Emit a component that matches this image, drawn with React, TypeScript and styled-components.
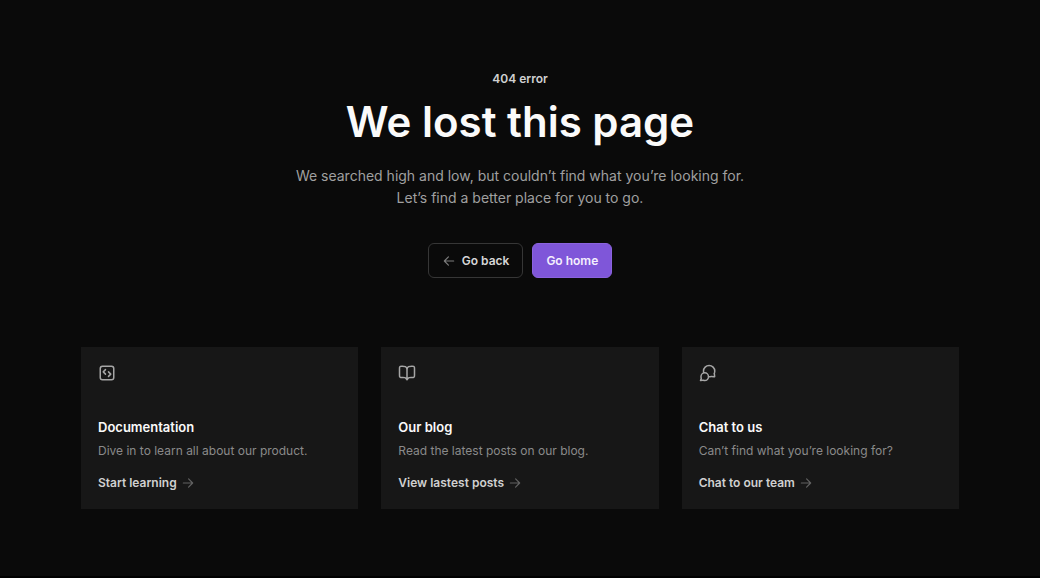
import React from "react";
import styled, { createGlobalStyle } from "styled-components";

const GlobalStyle = createGlobalStyle`
  *, *::before, *::after { box-sizing: border-box; }
  body {
    margin: 0;
    background: #0a0a0a;
    color: #fafafa;
    font-family: Inter, "Liberation Sans", sans-serif;
    -webkit-font-smoothing: antialiased;
  }
  h1, h2, p { margin: 0; }
`;

const Page = styled.main`
  display: flex;
  flex-direction: column;
  gap: 69px;
  min-height: 100vh;
  padding: 70px 81px 64px;
  border-bottom: 2px solid #000;
`;

const Hero = styled.header`
  display: flex;
  flex-direction: column;
  align-items: center;
  text-align: center;
`;

const Eyebrow = styled.p`
  font-size: 12px;
  line-height: 18px;
  font-weight: 600;
  color: #d0d0d0;
`;

const Heading = styled.h1`
  margin-top: 8px;
  font-size: 42px;
  line-height: 52px;
  font-weight: 600;
`;

const Lead = styled.p`
  max-width: 480px;
  margin-top: 17px;
  font-size: 14px;
  line-height: 22px;
  color: #a0a0a0;
`;

const Actions = styled.div`
  display: flex;
  gap: 9px;
  margin-top: 34px;
`;

const Button = styled.button<{ $primary?: boolean }>`
  display: inline-flex;
  align-items: center;
  gap: 6px;
  height: 35px;
  padding: 0 13px;
  border: 1px solid ${(p) => (p.$primary ? "#8b63de" : "#363636")};
  border-radius: 6px;
  background: ${(p) => (p.$primary ? "#7f56d9" : "#0a0a0a")};
  color: ${(p) => (p.$primary ? "#f4effd" : "#d6d6d6")};
  font-family: inherit;
  font-size: 12px;
  line-height: 18px;
  font-weight: 600;
  cursor: pointer;
`;

const Cards = styled.section`
  display: grid;
  grid-template-columns: repeat(3, minmax(0, 1fr));
  gap: 23px;
`;

const Card = styled.article`
  display: flex;
  flex-direction: column;
  align-items: flex-start;
  padding: 17px;
  background: #171717;
`;

const CardTitle = styled.h2`
  margin-top: 35px;
  font-size: 13px;
  line-height: 20px;
  font-weight: 600;
`;

const CardText = styled.p`
  margin-top: 5px;
  font-size: 12px;
  line-height: 18px;
  color: #8a8a8a;
`;

const CardLink = styled.a`
  display: inline-flex;
  align-items: center;
  gap: 4px;
  margin-top: 14px;
  color: #d0d0d0;
  font-size: 12px;
  line-height: 18px;
  font-weight: 600;
  text-decoration: none;
`;

const Icon = styled.svg<{ $size: number; $color: string }>`
  flex: none;
  width: ${(p) => p.$size}px;
  height: ${(p) => p.$size}px;
  fill: none;
  stroke: ${(p) => p.$color};
  stroke-width: 2;
  stroke-linecap: round;
  stroke-linejoin: round;
`;

const Arrow = ({ back = false }: { back?: boolean }) => (
  <Icon viewBox="0 0 24 24" $size={14} $color={back ? "#7c7c7c" : "#626262"} aria-hidden="true">
    <path d={back ? "M20 12H4m7-7-7 7 7 7" : "M4 12h16m-7-7 7 7-7 7"} />
  </Icon>
);

const cards = [
  {
    title: "Documentation",
    text: "Dive in to learn all about our product.",
    link: "Start learning",
    icon: (
      <>
        <rect x="3" y="3" width="18" height="18" rx="3" />
        <path d="m10 7.5-3 3 3 3m4-3 3 3-3 3" />
      </>
    ),
  },
  {
    title: "Our blog",
    text: "Read the latest posts on our blog.",
    link: "View lastest posts",
    icon: (
      <path d="M12 21l-.1-.15c-.7-1.04-1.04-1.56-1.5-1.94-.4-.33-.87-.58-1.38-.74C8.46 18 7.83 18 6.58 18H5.2c-1.12 0-1.68 0-2.11-.22a2 2 0 0 1-.87-.87C2 16.48 2 15.92 2 14.8V6.2c0-1.12 0-1.68.22-2.11a2 2 0 0 1 .87-.87C3.52 3 4.08 3 5.2 3h.4c2.24 0 3.36 0 4.22.44.75.38 1.36 1 1.74 1.74C12 6.04 12 7.16 12 9.4m0 11.6V9.4m0 11.6.1-.15c.7-1.04 1.04-1.56 1.5-1.94.4-.33.87-.58 1.38-.74.56-.17 1.19-.17 2.44-.17h1.38c1.12 0 1.68 0 2.11-.22.38-.19.68-.5.87-.87.22-.43.22-.99.22-2.11V6.2c0-1.12 0-1.68-.22-2.11a2 2 0 0 0-.87-.87C20.48 3 19.92 3 18.8 3h-.4c-2.24 0-3.36 0-4.22.44-.75.38-1.36 1-1.74 1.74C12 6.04 12 7.16 12 9.4" />
    ),
  },
  {
    title: "Chat to us",
    text: "Can’t find what you’re looking for?",
    link: "Chat to our team",
    icon: (
      <path d="M6.1 10.57A8 8 0 0 1 6 9.43C6 5.33 9.36 2 13.5 2S21 5.33 21 9.43c0 .92-.17 1.81-.48 2.63-.07.17-.1.25-.11.32a.8.8 0 0 0-.02.19c0 .07.01.15.03.3l.4 3.32c.04.36.06.54 0 .67a.5.5 0 0 1-.27.26c-.13.06-.31.03-.67-.02l-3.24-.48c-.17-.02-.25-.04-.33-.04a.8.8 0 0 0-.2.03c-.08.01-.18.05-.39.13A7.5 7.5 0 0 1 12.4 16.8M7.63 22C10.4 22 12.63 19.7 12.63 16.87S10.4 11.74 7.63 11.74 2.63 14.03 2.63 16.87c0 .57.09 1.12.26 1.63.07.21.1.32.12.4a.8.8 0 0 1 .01.2c0 .08-.02.17-.06.35L2 22l2.99-.41.31-.04.2.01c.07.02.17.05.38.13.55.2 1.14.31 1.75.31Z" />
    ),
  },
];

export default function App() {
  return (
    <>
      <GlobalStyle />
      <Page>
        <Hero>
          <Eyebrow>404 error</Eyebrow>
          <Heading>We lost this page</Heading>
          <Lead>
            We searched high and low, but couldn’t find what you’re looking for. Let’s find a better
            place for you to go.
          </Lead>
          <Actions>
            <Button type="button">
              <Arrow back />
              Go back
            </Button>
            <Button type="button" $primary>
              Go home
            </Button>
          </Actions>
        </Hero>
        <Cards>
          {cards.map((card) => (
            <Card key={card.title}>
              <Icon viewBox="0 0 24 24" $size={18} $color="#a6a6a6" aria-hidden="true">
                {card.icon}
              </Icon>
              <CardTitle>{card.title}</CardTitle>
              <CardText>{card.text}</CardText>
              <CardLink href="#">
                {card.link}
                <Arrow />
              </CardLink>
            </Card>
          ))}
        </Cards>
      </Page>
    </>
  );
}
